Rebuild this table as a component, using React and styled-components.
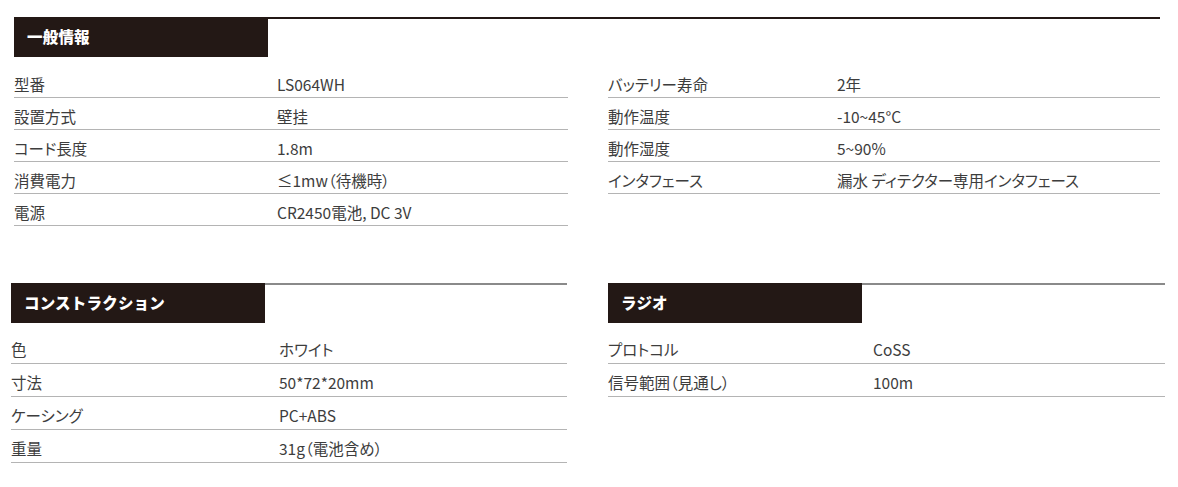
import React from 'react';
import styled, { createGlobalStyle } from 'styled-components';

const GlobalStyle = createGlobalStyle`
  body {
    margin: 0;
    background: #fff;
    font-family: "Noto Sans CJK JP", "Noto Sans", sans-serif;
    color: #3d3d3d;
  }
`;

const Page = styled.main`
  width: 1178px;
  padding-top: 17px;
`;

const Section = styled.section`
  margin-left: ${props => props.$left}px;
  width: ${props => props.$width}px;
`;

const Heading = styled.div`
  display: flex;
  border-top: 2px solid ${props => props.$line};
`;

const Tag = styled.h2`
  margin: -2px 0 0;
  width: 254px;
  height: 40px;
  box-sizing: border-box;
  padding: 0 0 3px 13px;
  display: flex;
  align-items: center;
  background: #231815;
  color: #fff;
  font-size: 15.5px;
  font-weight: 900;
  letter-spacing: 0.2px;
`;

const Columns = styled.div`
  display: grid;
  grid-template-columns: 554px 552px;
  column-gap: 40px;
  margin-top: 9px;
`;

const Table = styled.div`
  display: flex;
  flex-direction: column;
  margin-top: ${props => props.$top || 0}px;
`;

const Row = styled.div`
  display: grid;
  grid-template-columns: ${props => props.$label}px 1fr;
  height: ${props => props.$h}px;
  box-sizing: border-box;
  padding-top: 6px;
  border-bottom: 1px solid #b4b4b4;
  font-size: 15.5px;
  line-height: 24px;
  font-feature-settings: "palt";
  white-space: nowrap;
`;

const Cell = styled.span``;

const Pair = styled.div`
  display: flex;
  margin-top: 57px;
`;

const general = [
  [
    ['型番', 'LS064WH'],
    ['設置方式', '壁挂'],
    ['コード長度', '1.8m'],
    ['消費電力', '≤1mw（待機時）'],
    ['電源', 'CR2450電池, DC 3V'],
  ],
  [
    ['バッテリー寿命', '2年'],
    ['動作温度', '-10~45°C'],
    ['動作湿度', '5~90%'],
    ['インタフェース', '漏水 ディテクター専用インタフェース'],
  ],
];

const construction = [
  ['色', 'ホワイト'],
  ['寸法', '50*72*20mm'],
  ['ケーシング', 'PC+ABS'],
  ['重量', '31g（電池含め）'],
];

const radio = [
  ['プロトコル', 'CoSS'],
  ['信号範囲（見通し）', '100m'],
];

const SpecRows = ({ rows, label, h }) =>
  rows.map(([k, v]) => (
    <Row key={k} $label={label} $h={h}>
      <Cell>{k}</Cell>
      <Cell>{v}</Cell>
    </Row>
  ));

export default function App() {
  return (
    <Page>
      <GlobalStyle />
      <Section $left={14} $width={1146}>
        <Heading $line="#231815">
          <Tag>一般情報</Tag>
        </Heading>
        <Columns>
          <Table>
            <SpecRows rows={general[0]} label={263} h={32} />
          </Table>
          <Table>
            <SpecRows rows={general[1]} label={229} h={32} />
          </Table>
        </Columns>
      </Section>
      <Pair>
        <Section $left={11} $width={556}>
          <Heading $line="#8a8a8a">
            <Tag>コンストラクション</Tag>
          </Heading>
          <Table $top={8}>
            <SpecRows rows={construction} label={268} h={33} />
          </Table>
        </Section>
        <Section $left={41} $width={557}>
          <Heading $line="#8a8a8a">
            <Tag>ラジオ</Tag>
          </Heading>
          <Table $top={8}>
            <SpecRows rows={radio} label={265} h={33} />
          </Table>
        </Section>
      </Pair>
    </Page>
  );
}
